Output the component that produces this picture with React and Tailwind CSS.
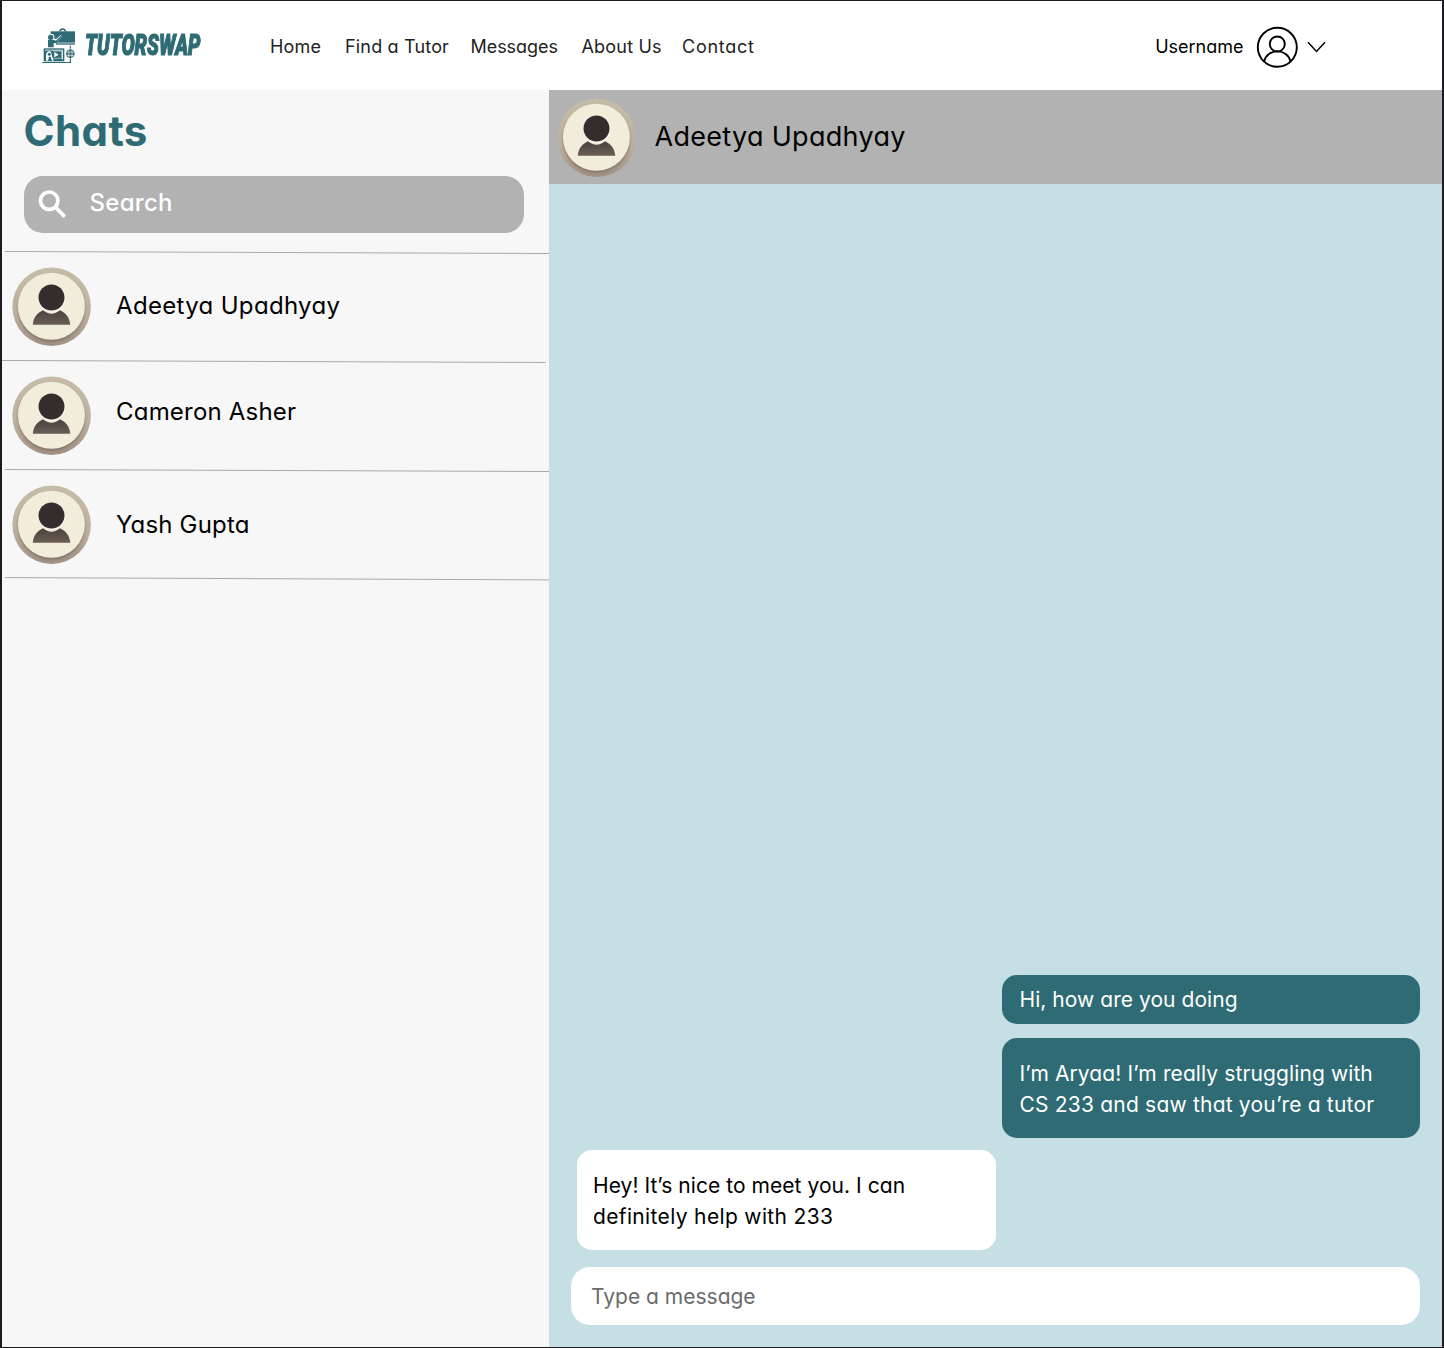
const NAV = [
  ["Home", "w-[75px]", "tracking-[0.2px]"],
  ["Find a Tutor", "w-[125.5px]", "tracking-[0.17px]"],
  ["Messages", "w-[111px]", "tracking-[-0.05px]"],
  ["About Us", "w-[100.5px]", "tracking-[0.2px]"],
  ["Contact", "w-[80px]", "tracking-[0.75px]"],
];

const CHATS = [
  { name: "Adeetya Upadhyay", text: "mt-[-3px] tracking-[0.33px]", divider: "ml-0", line: "M0 .5 544 2.5" },
  { name: "Cameron Asher", text: "mt-[-8px] tracking-[0.2px]", divider: "ml-[3px]", line: "M0 .5 544 2.5" },
  { name: "Yash Gupta", text: "mt-0 tracking-[0.17px]", divider: "ml-[3px] -mt-px", line: "M0 .6 544 2.9" },
];

function LogoMark() {
  return (
    <svg className="h-9 w-[34px] shrink-0" viewBox="36 38 102 108" fill="none">
      <path d="M89 49q1-7 9-8 8 1 9 8" stroke="#2f6b74" strokeWidth="4" />
      <path d="M62 48h73v34H62z" fill="#2f6b74" />
      <path d="M78 86h57" stroke="#2f6b74" strokeWidth="4" />
      <path d="M52 56h17l4 6v8l6 1 14-13 4 4-16 21-9-1v14H50z" fill="#fff" />
      <circle cx="62" cy="66" r="8" fill="#2f6b74" />
      <path d="M54 73h15l9 3 17-17 2 2-17 23-9-1v13H54z" fill="#2f6b74" />
      <path d="M41 99h62v39H41z" fill="#2f6b74" />
      <path d="M45.500 104.500h52v28.500" stroke="#fff" strokeWidth="2.500" />
      <path d="M70 107h25v22H70" stroke="#fff" strokeWidth="1.500" />
      <path d="M73 110v16l13-8z" fill="#fff" />
      <path d="M48 136v-17q2-11 9-11t8 10l6 18h-5l-4-12h-5l-3 12z" fill="#fff" />
      <circle cx="58" cy="117" r="4.500" fill="#2f6b74" />
      <path d="M37 141.500h86M121 91v9M121 129v12" stroke="#2f6b74" strokeWidth="3.500" />
      <circle cx="121" cy="115" r="13" fill="#2f6b74" />
      <path d="M109 110.500h24M109 120h24M116.500 103v24M126 103v24" stroke="#fff" strokeWidth="1.800" />
    </svg>
  );
}

function Avatar() {
  return (
    <svg className="h-20 w-[79px] shrink-0" viewBox="0 0 79 80">
      <defs>
        <linearGradient id="rim" x1="0" y1="0" x2="0" y2="1">
          <stop offset="0" stopColor="#c6bda9" />
          <stop offset="0.6" stopColor="#bbb09d" />
          <stop offset="1" stopColor="#a09085" />
        </linearGradient>
        <linearGradient id="torso" x1="0" y1="0" x2="0" y2="1">
          <stop offset="0" stopColor="#4b4340" />
          <stop offset="1" stopColor="#6a5d55" />
        </linearGradient>
        <filter id="soft" x="-20%" y="-20%" width="140%" height="140%">
          <feGaussianBlur stdDeviation="1.6" />
        </filter>
      </defs>
      <circle cx="39.600" cy="39.700" r="39.300" fill="url(#rim)" />
      <circle cx="39.400" cy="41.300" r="33.200" fill="#75665c" opacity="0.8" filter="url(#soft)" />
      <circle cx="39.400" cy="39.300" r="33.500" fill="#f2ecdb" />
      <path d="M20.800 57.700c.6-6.800 4-11.600 10.200-14.400 5.500 4.500 11.500 4.500 17 0 6.200 2.800 9.600 7.600 10.300 14.400z" fill="url(#torso)" />
      <circle cx="40" cy="31.200" r="13.600" fill="#fbf8f0" />
      <circle cx="39.500" cy="30.500" r="13" fill="#352c2e" />
    </svg>
  );
}

function Bubble({ className, lines }) {
  return (
    <div className={`flex w-[418.5px] flex-col justify-center rounded-[15px] text-[21px] leading-[31.5px] whitespace-nowrap ${className}`}>
      {lines.map(([text, tracking]) => (
        <p key={text} className={tracking}>{text}</p>
      ))}
    </div>
  );
}

export default function App() {
  return (
    <div className="flex h-[1348px] w-[1444px] flex-col overflow-hidden border-x-2 border-y border-[#1c1c1f] bg-white font-['Inter',sans-serif] text-black [font-feature-settings:'cv11']">
      <header className="flex h-[89px] shrink-0 items-center pl-10">
        <LogoMark />
        <div className="ml-[8.5px] h-9 w-[121.5px]">
          <span className="block w-max origin-left scale-x-[0.655] font-['Roboto',sans-serif] text-[30px] leading-[34px] font-black text-[#2f6b74] italic [-webkit-text-stroke:1.2px_#2f6b74]">
            TUTORSWAP
          </span>
        </div>
        <nav className="ml-[64px] flex pt-[3px] text-[18px] leading-6 whitespace-nowrap text-[#222]">
          {NAV.map(([label, width, tracking]) => (
            <a key={label} className={`${width} ${tracking}`}>{label}</a>
          ))}
        </nav>
        <div className="ml-auto flex items-center pt-[2px] pr-[116.5px]">
          <span className="text-[18px] leading-6">Username</span>
          <svg className="ml-3 size-[42px]" viewBox="0 0 42 42" fill="none" stroke="#000" strokeWidth="1.900">
            <circle cx="21.300" cy="21.300" r="19.500" />
            <circle cx="21.300" cy="18" r="7.500" />
            <path d="M8.100 35.500c1.500-6.500 7-10.100 13.200-10.100s11.700 3.600 13.200 10.100" />
          </svg>
          <svg className="ml-[9px] h-3 w-[19px]" viewBox="0 0 19 12" fill="none" stroke="#000" strokeWidth="1.500">
            <path d="m1 1.200 8.500 9.300L18 1.200" />
          </svg>
        </div>
      </header>

      <main className="flex min-h-0 flex-1">
        <aside className="w-[547px] shrink-0 bg-[#f7f7f7]">
          <h1 className="mt-[17px] ml-[21.5px] text-[42px] leading-[48px] font-bold tracking-[0.4px] text-[#2f6b74]">Chats</h1>
          <div className="mt-[20.5px] ml-[21.5px] flex h-[57.5px] w-[500.5px] items-center rounded-[19px] bg-[#b2b2b2] text-white">
            <svg className="ml-[14px] size-7" viewBox="0 0 28 28" fill="none" stroke="#fff" strokeWidth="3.700">
              <circle cx="11.200" cy="10.700" r="8.700" />
              <path d="m17.200 16.900 9.600 9.700" />
            </svg>
            <span className="-mt-[3px] ml-[24px] text-[24px] leading-8 font-medium tracking-[0.3px]">Search</span>
          </div>
          <svg className="mt-[18px] ml-[3px] block h-[3px] w-[544px]" viewBox="0 0 544 3">
            <path d="M0 .5 544 2.500" stroke="#a9a9a9" strokeWidth="1" />
          </svg>
          {CHATS.map((chat) => (
            <div key={chat.name}>
              <div className="flex h-[106px] items-center pl-[10px]">
                <Avatar />
                <span className={`ml-[25px] text-[24px] leading-8 ${chat.text}`}>{chat.name}</span>
              </div>
              <svg className={`block h-[3px] w-[544px] overflow-visible ${chat.divider}`} viewBox="0 0 544 3">
                <path d={chat.line} stroke="#a9a9a9" strokeWidth="1" />
              </svg>
            </div>
          ))}
        </aside>

        <section className="flex flex-1 flex-col bg-[#c5dfe4]">
          <div className="flex h-[94px] shrink-0 items-center bg-[#b2b2b2] pl-2">
            <div className="pt-px">
              <Avatar />
            </div>
            <h2 className="ml-[18.5px] text-[27px] leading-9 tracking-[0.3px]">Adeetya Upadhyay</h2>
          </div>
          <div className="flex flex-1 flex-col justify-end pr-[22px] pb-[22px]">
            <Bubble className="h-[49.5px] self-end bg-[#2f6b74] pl-[18px] text-white" lines={[["Hi, how are you doing", "tracking-[0.05px]"]]} />
            <Bubble
              className="mt-[14px] h-[100px] self-end bg-[#2f6b74] pt-0.5 pl-[18px] text-white"
              lines={[
                ["I’m Aryaa! I’m really struggling with", "tracking-[0.11px]"],
                ["CS 233 and saw that you’re a tutor", "tracking-[0.2px]"],
              ]}
            />
            <Bubble
              className="mt-[12px] ml-7 h-[100px] bg-white pt-0.5 pl-4 text-black"
              lines={[
                ["Hey! It’s nice to meet you. I can", "tracking-[0.05px]"],
                ["definitely help with 233", "tracking-[0.35px]"],
              ]}
            />
            <div className="mt-[17px] ml-[22px] flex h-[58px] items-center rounded-[19px] bg-white pt-0.5 pl-5 text-[21px] text-[#6b6b6b]">
              Type a message
            </div>
          </div>
        </section>
      </main>
    </div>
  );
}
